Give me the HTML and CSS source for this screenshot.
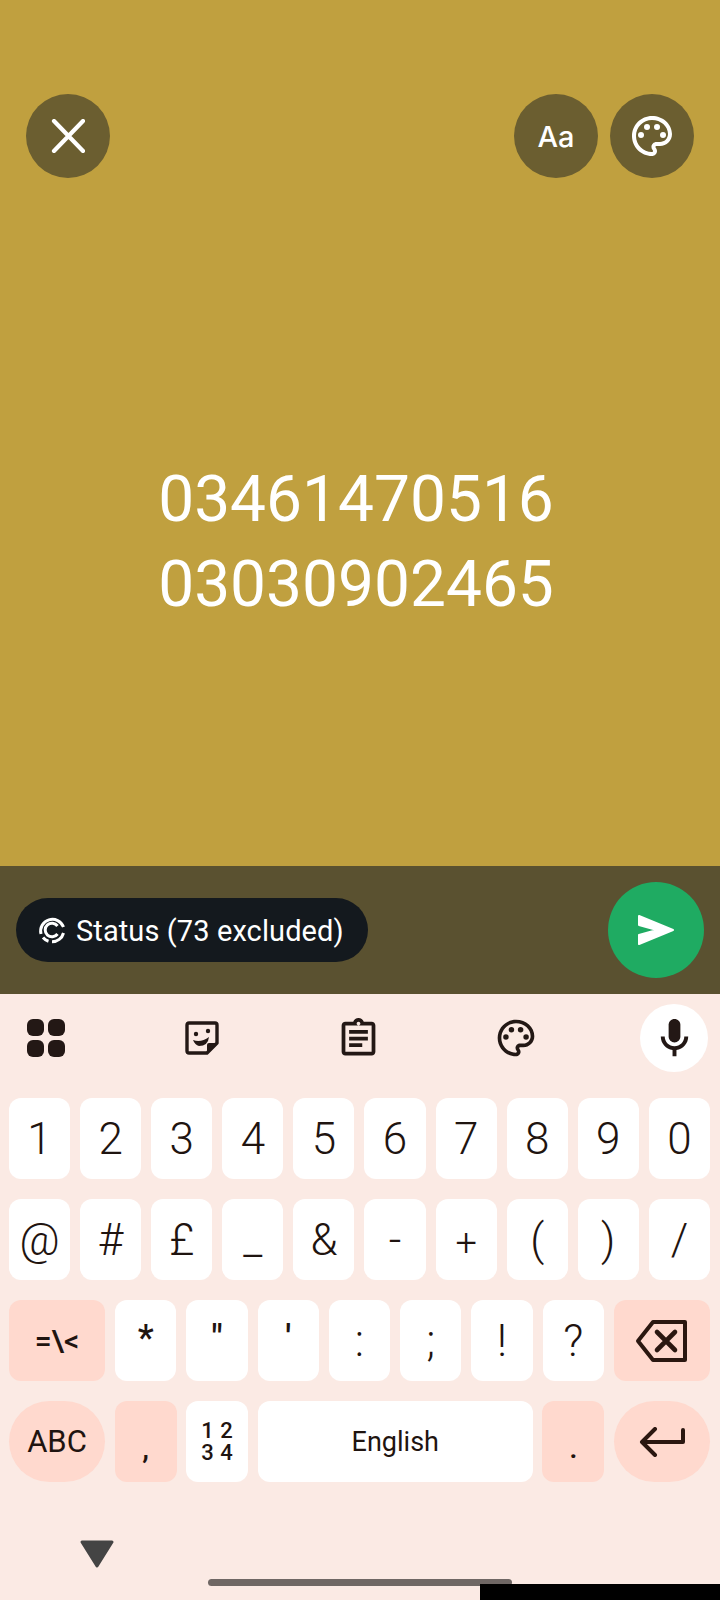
FILE: index.html
```html
<!DOCTYPE html>
<html lang="en">
  <head>
    <meta charset="UTF-8">
    <meta name="viewport" content="width=device-width, initial-scale=1.0">
    <title>Status</title>
    <link rel="stylesheet" href="styles.css">
  </head>
  <body>
    <main class="canvas">
      <div class="top-bar">
        <button class="round-btn">
          <svg width="34" height="34" viewBox="0 0 34 34"><path d="M3 2 L32 32 M32 2 L3 32" fill="none" stroke="#fff" stroke-width="4.2" stroke-linecap="round"/></svg>
        </button>
        <div class="top-right">
          <button class="round-btn aa">Aa</button>
          <button class="round-btn">
            <svg width="48" height="48" viewBox="0 0 24 24" fill="#fff"><path d="M12 22C6.49 22 2 17.51 2 12S6.49 2 12 2s10 4.04 10 9c0 3.31-2.69 6-6 6h-1.77c-.28 0-.5.22-.5.5 0 .12.05.23.13.33.41.47.64 1.06.64 1.67 0 1.38-1.12 2.5-2.5 2.5zm0-18c-4.41 0-8 3.59-8 8s3.59 8 8 8c.28 0 .5-.22.5-.5 0-.16-.08-.28-.14-.35-.41-.46-.63-1.05-.63-1.65 0-1.38 1.12-2.5 2.5-2.5H16c2.21 0 4-1.79 4-4 0-3.86-3.59-7-8-7z"/><circle cx="6.5" cy="11.5" r="1.5"/><circle cx="9.5" cy="7.5" r="1.5"/><circle cx="14.5" cy="7.5" r="1.5"/><circle cx="17.5" cy="11.5" r="1.5"/></svg>
          </button>
        </div>
      </div>
      <div class="message">03461470516<br>03030902465</div>
    </main>

    <div class="send-bar">
      <div class="audience">
        <svg width="28" height="28" viewBox="0 0 28 28" fill="none" stroke="#fff" stroke-width="3"><path d="M25.5 11 A11.8 11.8 0 0 0 3 18"/><path d="M5 21.5 A11.8 11.8 0 0 0 10.5 25.2"/><path d="M14 25.8 A11.8 11.8 0 0 0 25.5 17"/><path d="M19.5 10 A6.8 6.8 0 1 0 19.5 18"/></svg>
        <span>Status (73 excluded)</span>
      </div>
      <button class="send-btn">
        <svg width="38" height="32" viewBox="0 0 38 32"><path d="M2 2 L36 16 L2 30 V21 L20 16 L2 11 Z" fill="#fff" stroke="#fff" stroke-width="2" stroke-linejoin="round"/></svg>
      </button>
    </div>

    <section class="keyboard">
      <div class="kb-tools">
        <div class="tool">
          <div class="apps"><i></i><i></i><i></i><i></i></div>
        </div>
        <div class="tool nudge">
          <svg width="36" height="36" viewBox="0 0 36 36"><path d="M5 3 H31 Q33 3 33 5 V23 L23 33 H5 Q3 33 3 31 V5 Q3 3 5 3 Z" fill="none" stroke="#231815" stroke-width="3.4" stroke-linejoin="round"/><path d="M23 33 V25 Q23 23 25 23 H33 Z" fill="#231815"/><circle cx="12" cy="14" r="2.2" fill="#231815"/><circle cx="24" cy="11" r="2.2" fill="#231815"/><path d="M9 20 Q17 23 25 17 Q24 26 15 26 Q11 25 9 20 Z" fill="#231815"/></svg>
        </div>
        <div class="tool nudge">
          <svg width="45" height="45" viewBox="0 0 24 24" fill="#231815"><path d="M19 3h-4.18C14.4 1.84 13.3 1 12 1s-2.4.84-2.82 2H5c-1.1 0-2 .9-2 2v14c0 1.1.9 2 2 2h14c1.1 0 2-.9 2-2V5c0-1.1-.9-2-2-2zm-7 0c.55 0 1 .45 1 1s-.45 1-1 1-1-.45-1-1 .45-1 1-1zm7 16H5V5h14v14z"/><path d="M7 7.5h10v2H7zM7 11h10v2H7zM7 14.5h7v2H7z"/></svg>
        </div>
        <div class="tool nudge">
          <svg width="44" height="44" viewBox="0 0 24 24" fill="#231815"><path d="M12 22C6.49 22 2 17.51 2 12S6.49 2 12 2s10 4.04 10 9c0 3.31-2.69 6-6 6h-1.77c-.28 0-.5.22-.5.5 0 .12.05.23.13.33.41.47.64 1.06.64 1.67 0 1.38-1.12 2.5-2.5 2.5zm0-18c-4.41 0-8 3.59-8 8s3.59 8 8 8c.28 0 .5-.22.5-.5 0-.16-.08-.28-.14-.35-.41-.46-.63-1.05-.63-1.65 0-1.38 1.12-2.5 2.5-2.5H16c2.21 0 4-1.79 4-4 0-3.86-3.59-7-8-7z"/><circle cx="6.5" cy="11.5" r="1.5"/><circle cx="9.5" cy="7.5" r="1.5"/><circle cx="14.5" cy="7.5" r="1.5"/><circle cx="17.5" cy="11.5" r="1.5"/></svg>
        </div>
        <div class="tool mic">
          <svg width="47" height="47" viewBox="0 0 24 24" fill="#231815"><path d="M12 14c1.66 0 3-1.34 3-3V5c0-1.66-1.34-3-3-3S9 3.34 9 5v6c0 1.66 1.34 3 3 3z"/><path d="M17 11c0 2.76-2.24 5-5 5s-5-2.24-5-5H5c0 3.53 2.61 6.43 6 6.92V21h2v-3.08c3.39-.49 6-3.39 6-6.92h-2z"/></svg>
        </div>
      </div>

      <div class="kb-row">
        <div class="key">1</div><div class="key">2</div><div class="key">3</div><div class="key">4</div><div class="key">5</div>
        <div class="key">6</div><div class="key">7</div><div class="key">8</div><div class="key">9</div><div class="key">0</div>
      </div>
      <div class="kb-row">
        <div class="key">@</div><div class="key">#</div><div class="key">£</div><div class="key">_</div><div class="key">&amp;</div>
        <div class="key">-</div><div class="key plus">+</div><div class="key">(</div><div class="key">)</div><div class="key">/</div>
      </div>
      <div class="kb-row">
        <div class="key wide special symbols">=\&lt;</div>
        <div class="key mark">*</div><div class="key mark">"</div><div class="key mark">'</div><div class="key">:</div>
        <div class="key">;</div><div class="key">!</div><div class="key">?</div>
        <div class="key wide special">
          <svg width="54" height="46" viewBox="0 0 54 46" fill="none" stroke="#2b1710" stroke-width="4" stroke-linecap="round" stroke-linejoin="round"><path d="M50 4 H18 L3 23 L18 42 H50 Z"/><path d="M22 14 L40 32 M40 14 L22 32" stroke-width="4.6"/></svg>
        </div>
      </div>
      <div class="kb-row last-row">
        <div class="key wide special pill abc">ABC</div>
        <div class="key special small">,</div>
        <div class="key numpad">1 2<br>3 4</div>
        <div class="key space">English</div>
        <div class="key special small">.</div>
        <div class="key wide special pill">
          <svg width="46" height="30" viewBox="0 0 46 30" fill="none" stroke="#2b1710" stroke-width="4" stroke-linecap="round" stroke-linejoin="round"><path d="M44 3 V15 H4"/><path d="M16 2 L3 15 L16 28"/></svg>
        </div>
      </div>

      <div class="kb-nav">
        <svg class="nav-down" width="36" height="30" viewBox="0 0 36 30"><path d="M3 3 H33 L18 27 Z" fill="#444" stroke="#444" stroke-width="3" stroke-linejoin="round"/></svg>
        <div class="home-bar"></div>
      </div>
      <div class="black-strip"></div>
    </section>
  </body>
</html>
```

FILE: styles.css
```css
* { box-sizing: border-box; }
body { margin: 0; width: 720px; height: 1600px; overflow: hidden; font-family: Roboto, sans-serif; display: flex; flex-direction: column; background-color: #fbeae4; }
button { border: none; padding: 0; font-family: inherit; }

.canvas { flex: none; height: 866px; background-color: #c0a03f; padding: 94px 26px 0; }
.top-bar { display: flex; justify-content: space-between; }
.top-right { display: flex; gap: 12px; }
.round-btn { width: 84px; height: 84px; border-radius: 50%; background-color: #6b5e30; color: #fff; display: flex; align-items: center; justify-content: center; }
.aa { font-family: Inter, sans-serif; font-size: 29px; font-weight: 500; }
.message { margin-top: 279px; padding-right: 8px; text-align: center; color: #fff; font-size: 64px; line-height: 85px; }

.send-bar { flex: none; height: 128px; background-color: #5a5130; padding: 16px; display: flex; align-items: center; justify-content: space-between; }
.audience { width: 352px; height: 64px; border-radius: 32px; background-color: #14191e; color: #fff; display: flex; align-items: center; gap: 10px; padding-left: 22px; font-size: 29px; letter-spacing: 0.1px; white-space: nowrap; }
.audience span { padding-top: 2px; }
.send-btn { width: 96px; height: 96px; border-radius: 50%; background-color: #1fab62; display: flex; align-items: center; justify-content: center; }

.keyboard { flex: 1; position: relative; padding: 10px 10px 0 9px; }
.kb-tools { height: 68px; margin: 0 2px 26px 3px; display: flex; justify-content: space-between; align-items: center; }
.tool { width: 68px; height: 68px; display: flex; align-items: center; justify-content: center; }
.nudge { padding-right: 3px; }
.mic { background-color: #fff; border-radius: 50%; }
.apps { display: grid; grid-template-columns: 17px 17px; gap: 4px; }
.apps i { display: block; height: 17px; background-color: #231815; border-radius: 6px; }

.kb-row { display: flex; gap: 10px; height: 81px; margin-bottom: 20px; }
.last-row { gap: 9.7px; }
.key { flex: 1 1 0; min-width: 0; background-color: #fff; border-radius: 12px; color: #1f1410; font-size: 44px; font-weight: 350; display: flex; align-items: center; justify-content: center; }
.wide { flex: 0 0 96px; }
.special { background-color: #ffd9ce; }
.pill { border-radius: 41px; }
.symbols { font-size: 30px; font-weight: 500; }
.small { font-size: 30px; font-weight: 500; padding-top: 12px; }
.plus { font-size: 38px; padding-top: 6px; }
.mark { font-size: 36px; font-weight: 500; padding-bottom: 6px; }
.abc { font-size: 31px; font-weight: 400; }
.numpad { font-size: 22px; font-weight: 500; line-height: 22px; text-align: center; letter-spacing: 0.5px; }
.space { flex: 0 0 275px; font-size: 27px; font-weight: 400; }

.kb-nav { position: relative; height: 98px; }
.nav-down { position: absolute; left: 70px; top: 37px; }
.home-bar { position: absolute; left: 199px; top: 77px; width: 304px; height: 7px; border-radius: 4px; background-color: #6f6764; }
.black-strip { position: absolute; right: 0; bottom: 0; width: 240px; height: 16px; background-color: #000; }
```
